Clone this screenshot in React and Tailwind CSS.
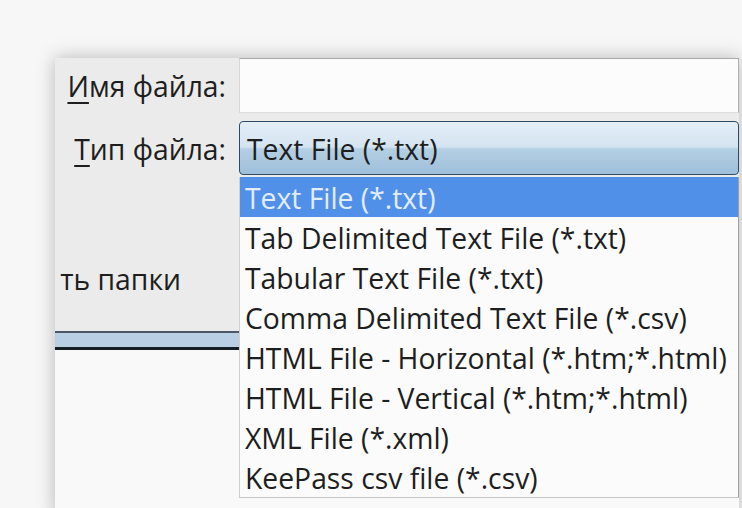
import React from "react";

const items = [
  "Text File (*.txt)",
  "Tab Delimited Text File (*.txt)",
  "Tabular Text File (*.txt)",
  "Comma Delimited Text File (*.csv)",
  "HTML File - Horizontal (*.htm;*.html)",
  "HTML File - Vertical (*.htm;*.html)",
  "XML File (*.xml)",
  "KeePass csv file (*.csv)",
];

export default function App() {
  return (
    <div className="w-[742px] h-[508px] overflow-hidden bg-[#f7f7f7] pt-[58px] pl-[55px] font-['Open_Sans',sans-serif] text-[#1e1e1e] text-[28.3px] leading-none">
      <div className="flex w-[684px] h-[460px] shadow-[0_0_18px_rgba(0,0,0,0.26)] bg-[#f9f9f9]">
        {/* left column */}
        <div className="w-[184px] flex flex-col">
          <div className="h-[273px] bg-[#ebebeb] flex flex-col">
            <div className="h-[55px] flex items-center justify-end pr-[13px] pt-[1px]">
              <span>
                <span className="underline underline-offset-[5px] decoration-[2px]">И</span>мя файла:
              </span>
            </div>
            <div className="h-[8px]" />
            <div className="h-[54px] flex items-center justify-end pr-[13px] pt-[2px]">
              <span>
                <span className="underline underline-offset-[5px] decoration-[2px]">Т</span>ип файла:
              </span>
            </div>
            <div className="mt-[83px] h-[40px] flex items-center justify-end pr-[58px] pt-[2px] whitespace-nowrap">
              <span>ть папки</span>
            </div>
          </div>
          <div className="h-[2px] bg-[#4a5868]" />
          <div className="h-[14px] bg-[#b9cfe4]" />
          <div className="h-[3px] bg-[#151d25]" />
          <div className="flex-1 bg-[#f9f9f9]" />
        </div>
        {/* right column */}
        <div className="w-[500px] flex flex-col bg-[#f9f9f9]">
          <div className="h-[55px] bg-[#fcfcfc] border-t border-r border-b border-l border-t-[#a9a9a9] border-r-[#b0b0b0] border-b-[#dddddd] border-l-[#d6d6d6]" />
          <div className="h-[8px] bg-[#ebebeb]" />
          <div className="h-[54px] rounded-[4px] border border-[#2f4a63] bg-[linear-gradient(to_bottom,#e4eef7_0%,#d3e4f0_48%,#b4cfe3_52%,#9ebfda_100%)] flex items-center pl-[7px] pt-[2px]">
            Text File (*.txt)
          </div>
          <div className="h-[2px] bg-[#ebebeb]" />
          <div className="border-l border-r border-b border-l-[#d0d0d0] border-r-[#a0a0a0] border-b-[#c4c4c4] bg-[#fbfbfb]">
            {items.map((t, i) => (
              <div
                key={t}
                className={
                  i === 0
                    ? "h-[40px] flex items-center pl-[5px] pt-[3px] whitespace-nowrap bg-[#5190e9] text-[#e2edfb]"
                    : "h-[40px] flex items-center pl-[5px] pt-[3px] whitespace-nowrap"
                }
              >
                {t}
              </div>
            ))}
          </div>
        </div>
      </div>
    </div>
  );
}
